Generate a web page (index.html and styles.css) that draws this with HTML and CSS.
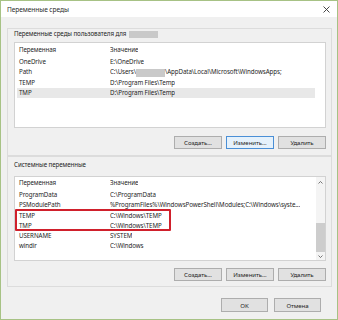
FILE: index.html
```html
<!DOCTYPE html>
<html>

<head>
  <title>Переменные среды</title>
  <link rel="stylesheet" href="styles.css">
</head>

<body>
  <div class="window">
    <!-- Title bar -->
    <div class="titlebar">
      <span class="title">Переменные среды</span>
      <svg class="close" width="7" height="7" viewBox="0 0 7 7">
        <path d="M0.5 0.5 L6.5 6.5 M6.5 0.5 L0.5 6.5" stroke="#333" stroke-width="0.9" fill="none"/>
      </svg>
    </div>

    <div class="content">
      <!-- User variables -->
      <div class="panel panel-user">
        <div class="panel-label">Переменные среды пользователя для <span class="masked label-mask"></span></div>
        <div class="list list-user">
          <div class="rows">
            <div class="row head"><span class="col-name">Переменная</span><span class="col-value">Значение</span></div>
            <div class="row"><span class="col-name">OneDrive</span><span class="col-value">E:\OneDrive</span></div>
            <div class="row"><span class="col-name">Path</span><span class="col-value">C:\Users\<span class="masked path-mask"></span>\AppData\Local\Microsoft\WindowsApps;</span></div>
            <div class="row"><span class="col-name">TEMP</span><span class="col-value">D:\Program Files\Temp</span></div>
            <div class="row selected"><span class="col-name">TMP</span><span class="col-value">D:\Program Files\Temp</span></div>
          </div>
        </div>
        <div class="buttons">
          <button class="btn">Создать...</button>
          <button class="btn focused">Изменить...</button>
          <button class="btn">Удалить</button>
        </div>
      </div>

      <!-- System variables -->
      <div class="panel panel-system">
        <div class="panel-label">Системные переменные</div>
        <div class="list list-system">
          <div class="rows">
            <div class="row head"><span class="col-name">Переменная</span><span class="col-value">Значение</span></div>
            <div class="row"><span class="col-name">ProgramData</span><span class="col-value">C:\ProgramData</span></div>
            <div class="row"><span class="col-name">PSModulePath</span><span class="col-value">%ProgramFiles%\WindowsPowerShell\Modules;C:\Windows\syste...</span></div>
            <div class="row"><span class="col-name">TEMP</span><span class="col-value">C:\Windows\TEMP</span></div>
            <div class="row"><span class="col-name">TMP</span><span class="col-value">C:\Windows\TEMP</span></div>
            <div class="row"><span class="col-name">USERNAME</span><span class="col-value">SYSTEM</span></div>
            <div class="row"><span class="col-name">windir</span><span class="col-value">C:\Windows</span></div>
          </div>
          <div class="scrollbar">
            <div class="arrow arrow-up">
              <svg width="5" height="3" viewBox="0 0 5 3"><path d="M0.5 2.5 L2.5 0.5 L4.5 2.5" stroke="#555" stroke-width="0.8" fill="none"/></svg>
            </div>
            <div class="track"></div>
            <div class="thumb"></div>
            <div class="arrow arrow-down">
              <svg width="5" height="3" viewBox="0 0 5 3"><path d="M0.5 0.5 L2.5 2.5 L4.5 0.5" stroke="#555" stroke-width="0.8" fill="none"/></svg>
            </div>
          </div>
          <!-- Highlight annotation -->
          <div class="highlight"></div>
        </div>
        <div class="buttons">
          <button class="btn">Создать...</button>
          <button class="btn">Изменить...</button>
          <button class="btn">Удалить</button>
        </div>
      </div>

      <!-- Dialog buttons -->
      <div class="dialog-buttons">
        <button class="btn btn-ok">OK</button>
        <button class="btn btn-cancel">Отмена</button>
      </div>
    </div>
  </div>
</body>

</html>
```

FILE: styles.css
```css
/* Reset */
body,
button {
  margin: 0;
  padding: 0;
}

body {
  font-family: 'Noto Sans', sans-serif;
  font-size: 6.2px;
  letter-spacing: -0.08px;
  color: #1e1e1e;
  background-color: #f0f0f0;
}

.window {
  width: 338px;
  height: 320px;
  box-sizing: border-box;
  border: 1px solid #a7c285;
  /* Light green frame */
  background-color: #f0f0f0;
  display: flex;
  flex-direction: column;
}

.titlebar {
  height: 16px;
  background-color: #fff;
  display: flex;
  align-items: center;
  justify-content: space-between;
  padding: 0 7px 0 6px;
}

.title {
  font-size: 6.6px;
  color: #2b2b2b;
}

.content {
  flex: 1;
  padding: 11px 5px 0 6px;
  display: flex;
  flex-direction: column;
}

.panel {
  border: 1px solid #dcdcdc;
  padding: 0 5px 6px 6px;
  display: flex;
  flex-direction: column;
}

.panel-label {
  height: 10px;
  line-height: 10px;
  margin-bottom: 3px;
  display: flex;
  align-items: center;
  gap: 3px;
}

.panel-system {
  padding-top: 3px;
  padding-bottom: 5px;
}

.panel-system .panel-label {
  margin-bottom: 6px;
}

.masked {
  display: inline-block;
  background-color: #c9c9c9;
}

.label-mask {
  width: 29px;
  height: 7px;
}

.path-mask {
  width: 29px;
  height: 8px;
  vertical-align: middle;
}

.list {
  position: relative;
  background-color: #fff;
  border: 1px solid #d2d2d2;
  display: flex;
}

.list-user {
  height: 84px;
}

.list-system {
  height: 83px;
}

.rows {
  flex: 1;
  min-width: 0;
  padding-left: 2px;
  padding-right: 10px;
}

.row {
  height: 10.3px;
  line-height: 10.3px;
  display: flex;
  white-space: nowrap;
}

.row.head {
  height: 14px;
  line-height: 14px;
}

.list-system .row.head {
  height: 13px;
  line-height: 12px;
}

.row.selected {
  background-color: #e8e8e8;
}

.col-name {
  width: 91px;
  padding-left: 2px;
  flex-shrink: 0;
}

.col-value {
  overflow: hidden;
}

/* Scrollbar of the system list */
.scrollbar {
  width: 9px;
  display: flex;
  flex-direction: column;
  background-color: #f4f4f4;
}

.arrow {
  display: flex;
  align-items: center;
  justify-content: center;
}

.arrow-up {
  height: 10px;
}

.arrow-down {
  height: 8px;
}

.track {
  flex: 1;
}

.thumb {
  height: 29px;
  background-color: #cdcdcd;
}

/* Red annotation frame */
.highlight {
  position: absolute;
  left: 0;
  top: 32px;
  width: 152px;
  height: 18px;
  border: 2px solid #d0202c;
  border-radius: 1px;
}

.buttons {
  display: flex;
  justify-content: flex-end;
  gap: 4px;
  margin-top: 8px;
}

.panel-system .buttons {
  margin-top: 7px;
}

.btn {
  font-family: 'Noto Sans', sans-serif;
  font-size: 6.1px;
  letter-spacing: -0.08px;
  color: #1e1e1e;
  width: 48px;
  height: 13px;
  background-color: #e1e1e1;
  border: 1px solid #adadad;
  box-sizing: border-box;
}

.btn.focused {
  border-color: #4a8fd6;
  /* Blue focus frame */
  background-color: #e5f1fb;
}

.dialog-buttons {
  display: flex;
  justify-content: flex-end;
  gap: 6px;
  margin-top: 11px;
  padding-right: 11px;
}

.btn-ok,
.btn-cancel {
  width: 47px;
  height: 14px;
}
```
